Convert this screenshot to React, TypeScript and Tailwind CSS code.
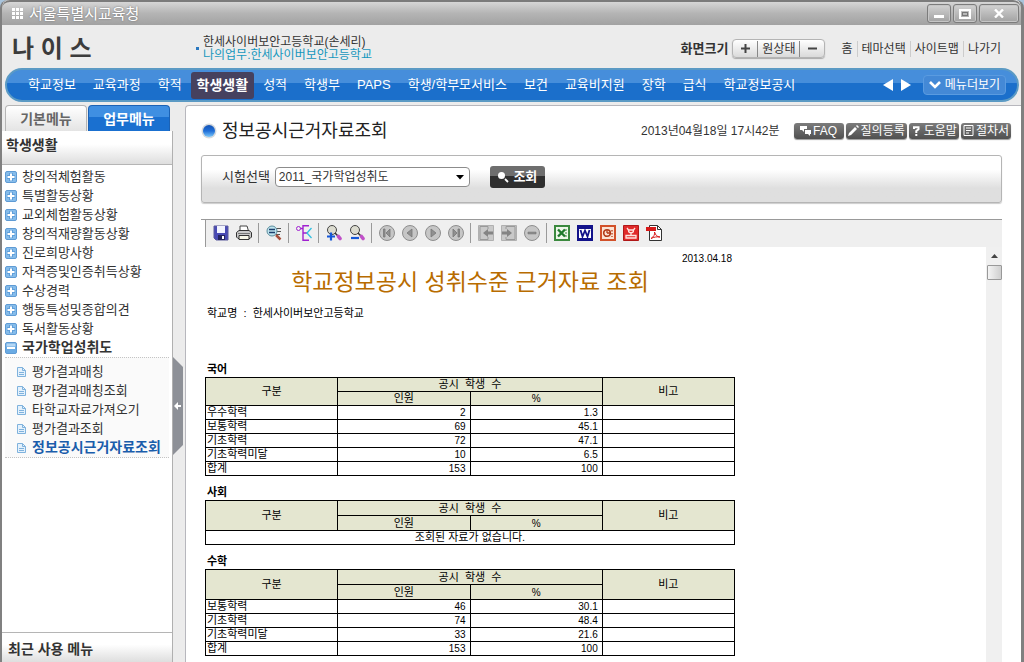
import React from "react";

const SANS = "font-['Liberation_Sans','Noto_Sans_CJK_KR',sans-serif]";

const navItems = [
  "학교정보", "교육과정", "학적", "학생생활", "성적", "학생부", "PAPS",
  "학생/학부모서비스", "보건", "교육비지원", "장학", "급식", "학교정보공시",
];

const sideItems = [
  "창의적체험활동", "특별활동상황", "교외체험활동상황", "창의적재량활동상황", "진로희망사항",
  "자격증및인증취득상황", "수상경력", "행동특성및종합의견", "독서활동상황",
];

const subItems = ["평가결과매칭", "평가결과매칭조회", "타학교자료가져오기", "평가결과조회", "정보공시근거자료조회"];

type Row = [string, string, string];
type Section = { title: string; rows: Row[]; tall: boolean };

const sections: Section[] = [
  {
    title: "국어",
    tall: false,
    rows: [
      ["우수학력", "2", "1.3"],
      ["보통학력", "69", "45.1"],
      ["기초학력", "72", "47.1"],
      ["기초학력미달", "10", "6.5"],
      ["합계", "153", "100"],
    ],
  },
  { title: "사회", tall: true, rows: [] },
  {
    title: "수학",
    tall: true,
    rows: [
      ["보통학력", "46", "30.1"],
      ["기초학력", "74", "48.4"],
      ["기초학력미달", "33", "21.6"],
      ["합계", "153", "100"],
    ],
  },
];

function TitleBar() {
  const btn =
    "flex h-[19px] items-center justify-center rounded-[3px] border border-[#7c7c7c] bg-linear-to-b from-[#d2d2d2] to-[#a2a2a2] shadow-[inset_0_0_0_1px_#c6c6c6]";
  return (
    <header className="flex h-[25px] shrink-0 items-center rounded-t-lg border-t-2 border-[#7b7b7b] bg-linear-to-b from-[#d6d6d6] via-[#b4b4b4] via-50% to-[#a2a2a2] pr-0.5 pl-[10px]">
      <svg width="11" height="11" viewBox="0 0 11 11" fill="#fff" aria-hidden="true">
        {[0, 4, 8].map((y) => [0, 4, 8].map((x) => <rect key={`${x}-${y}`} x={x} y={y} width="3" height="3" />))}
      </svg>
      <h1 className="ml-1.5 grow text-[15px] leading-5 text-white [text-shadow:0_0_2px_#666]">서울특별시교육청</h1>
      <div className="flex gap-0.5">
        <button aria-label="최소화" className={`${btn} w-6`}>
          <svg width="12" height="10"><rect x="1" y="6" width="10" height="3" fill="#fff" /></svg>
        </button>
        <button aria-label="최대화" className={`${btn} w-6`}>
          <svg width="12" height="10" fill="none">
            <rect x="1" y="1" width="10" height="8" stroke="#fff" strokeWidth="2" />
            <rect x="3.5" y="3.5" width="5" height="3" stroke="#777" />
          </svg>
        </button>
        <button aria-label="닫기" className={`${btn} w-10`}>
          <svg width="10" height="9" stroke="#fff" strokeWidth="2.4"><path d="M1 .5 9 8.5M9 .5 1 8.5" /></svg>
        </button>
      </div>
    </header>
  );
}

function TopInfo() {
  return (
    <div className="flex h-[43px] shrink-0 items-center pt-1 pr-5 pl-2.5 text-[#333]">
      <div className="w-[184px] text-[24px] leading-8 font-bold text-[#3c3c3c]">나 이 스</div>
      <div className="grow">
        <div className="flex items-center gap-1">
          <span className="size-[3px] bg-[#2a78c0]" />
          <div className="text-[12px] leading-[13px]">
            <p>한세사이버보안고등학교(손세리)</p>
            <p className="text-[#1597bd]">나의업무:한세사이버보안고등학교</p>
          </div>
        </div>
      </div>
      <span className="text-[13px] font-bold">화면크기</span>
      <div className="ml-1 flex h-[19px] items-center rounded-[4px] border border-[#b4b4b4] bg-linear-to-b from-white to-[#dadada] text-[12px] leading-4 shadow-[0_1px_1px_#aaa]">
        <button aria-label="확대" className="flex w-6 justify-center">
          <svg width="9" height="9" stroke="#444" strokeWidth="2"><path d="M0 4.5h9M4.5 0v9" /></svg>
        </button>
        <button className="border-x border-[#888] px-1">원상태</button>
        <button aria-label="축소" className="flex w-6 justify-center">
          <svg width="9" height="9" stroke="#444" strokeWidth="2"><path d="M0 4.5h9" /></svg>
        </button>
      </div>
      <nav className="ml-3 flex divide-x divide-[#ccc] text-[12px] leading-4">
        {["홈", "테마선택", "사이트맵", "나가기"].map((t) => (
          <a key={t} href="#" className="px-1 last:pr-0">{t}</a>
        ))}
      </nav>
    </div>
  );
}

function MainNav() {
  return (
    <nav className="mr-[2px] ml-[3px] flex h-[34px] shrink-0 items-center gap-px rounded-full border-2 border-[#5b9ac4] bg-linear-to-b from-[#468edb] from-45% to-[#1b6fcb] to-45% pr-[11px] pl-[13px] text-[13px] text-white">
      {navItems.map((t) =>
        t === "학생생활" ? (
          <a key={t} href="#" aria-current="page" className="flex h-[27px] items-center rounded-[3px] bg-[#46415f] px-1.5 text-[14px] font-bold whitespace-nowrap">{t}</a>
        ) : (
          <a key={t} href="#" className="px-2 whitespace-nowrap">{t}</a>
        ),
      )}
      <div className="ml-auto flex items-center">
        <button aria-label="이전"><svg width="10" height="12" fill="#fff"><path d="M10 0v12L0 6z" /></svg></button>
        <button aria-label="다음" className="ml-2"><svg width="10" height="12" fill="#fff"><path d="M0 0v12l10-6z" /></svg></button>
        <button className="ml-3 flex h-5 items-center gap-1 rounded-[4px] border border-[#5a9be0] bg-[#4489d6] px-[5px] text-[12px] leading-4">
          <svg width="12" height="8" fill="none" stroke="#fff" strokeWidth="2.6"><path d="M1 1l5 5 5-5" /></svg>
          메뉴더보기
        </button>
      </div>
    </nav>
  );
}

function BoxIcon({ open }: { open?: boolean }) {
  return (
    <svg width="12" height="12" viewBox="0 0 12 12" className="shrink-0" aria-hidden="true">
      <rect x=".5" y=".5" width="11" height="11" rx="1.5" fill={open ? "#6aabe4" : "#86bcea"} stroke="#5f9bd4" />
      {open ? (
        <>
          <path d="M1.5 1.5h9v3h-9z" fill="#b5d7f5" />
          <path d="M2 6h8" stroke="#fff" strokeWidth="2" />
        </>
      ) : (
        <>
          <path d="M6 2v8M2 6h8" stroke="#5f9fdb" strokeWidth="4" />
          <path d="M6 2.500v7M2.500 6h7" stroke="#fff" strokeWidth="2" />
        </>
      )}
    </svg>
  );
}

function PageIcon() {
  return (
    <svg width="9" height="10" viewBox="0 0 9 10" className="shrink-0" fill="none" aria-hidden="true">
      <path d="M.5.5h5l3 3v6h-8z" fill="#e4f1fc" stroke="#7fb2dd" />
      <path d="M5.5.5v3h3M2 5.500h5M2 7.500h5" stroke="#7fb2dd" />
    </svg>
  );
}

function Sidebar() {
  return (
    <aside className="flex w-[171px] shrink-0 flex-col">
      <div className="flex h-[26px] shrink-0 gap-px px-[3px] text-[14px] leading-5 font-bold">
        <button className="w-[82px] rounded-t-[4px] border border-b-0 border-[#b5b5b5] bg-linear-to-b from-white to-[#e4e4e4] text-[#666]">기본메뉴</button>
        <button className="w-[82px] rounded-t-[4px] border border-b-0 border-[#1b62b5] bg-linear-to-b from-[#3f8fe2] from-45% to-[#1a70d0] to-45% text-white">업무메뉴</button>
      </div>
      <div className="flex min-h-0 grow flex-col border-r border-[#b0b0b0] bg-white">
        <h2 className="flex h-[34px] shrink-0 items-center border-b border-[#b5b5b5] bg-linear-to-b from-white from-40% to-[#dedede] pb-1 pl-1 text-[14px] font-bold text-[#333]">학생생활</h2>
        <ul className="pt-0.5 text-[13px] leading-[19px] text-[#333]">
          {sideItems.map((t) => (
            <li key={t}>
              <a href="#" className="flex items-center gap-[5px] pl-[3px]"><BoxIcon />{t}</a>
            </li>
          ))}
          <li>
            <a href="#" className="flex items-center gap-[5px] pl-[3px] text-[14px] font-bold"><BoxIcon open />국가학업성취도</a>
            <ul className="mx-[3px] border-y border-dotted border-[#c4c4c4] bg-[#fafafa] pt-1">
              {subItems.map((t) => (
                <li key={t}>
                  <a href="#" className={`flex items-center gap-1.5 pl-3 whitespace-nowrap ${t === "정보공시근거자료조회" ? "text-[14px] font-bold text-[#1a5dab]" : ""}`}>
                    <PageIcon />{t}
                  </a>
                </li>
              ))}
            </ul>
          </li>
        </ul>
        <h2 className="mt-auto flex h-[30px] shrink-0 items-center border-t border-[#b5b5b5] bg-linear-to-b from-white from-40% to-[#dedede] pt-1 pl-1.5 text-[14px] font-bold text-[#333]">최근 사용 메뉴</h2>
      </div>
    </aside>
  );
}

function Circle({ d }: { d: string }) {
  return (
    <>
      <circle cx="8" cy="8" r="7.5" fill="#c6c6c6" stroke="#8e8e8e" />
      <path d={d} fill="#909090" stroke="#777" strokeWidth=".8" />
    </>
  );
}

const toolGroups: { name: string; art: React.ReactNode }[][] = [
  [
    {
      name: "저장",
      art: (
        <>
          <path d="M1 1h14v14H3l-2-2z" fill="#4a4bb5" stroke="#5a5a9c" />
          <path d="M4 1h8v7H4z" fill="#f2f4ff" />
          <path d="M5 10h7v5H5z" fill="#24245f" />
          <path d="M9 11h2v3H9z" fill="#fff" />
        </>
      ),
    },
    {
      name: "인쇄",
      art: (
        <>
          <path d="M4 6V1h7l1.500 5" fill="#fff" stroke="#444" />
          <path d="M.5 7.500 3 5.500h10l2.500 2V12l-1.500 1.500H2L.5 12z" fill="#c9c9c9" stroke="#333" />
          <path d="M3 10.500h10v4H3z" fill="#f7f7e8" stroke="#333" />
          <path d="M2 8.500h12" stroke="#777" />
        </>
      ),
    },
  ],
  [
    {
      name: "찾기",
      art: (
        <>
          <path d="M10 3.500h5M10 6.500h5M10 9.500h4" stroke="#555" />
          <circle cx="6" cy="6" r="5" fill="#bfe4ee" stroke="#5b8c9c" />
          <path d="M3 4.500h6M3 7.500h6" stroke="#1d3f6e" strokeWidth="1.500" />
          <path d="m10 10 4.500 4.500" stroke="#a8503c" strokeWidth="2.500" />
        </>
      ),
    },
  ],
  [
    {
      name: "트리",
      art: (
        <g fill="none">
          <circle cx="2.500" cy="3.500" r="2" stroke="#a020d0" />
          <path d="M4.500 3.500h2M13 .8H7v14.400h6M7 8h4" stroke="#a020d0" strokeWidth="1.400" />
          <path d="m15.500 3-4.500 5 4.500 5" stroke="#30bfe0" strokeWidth="1.300" />
        </g>
      ),
    },
  ],
  [
    {
      name: "확대",
      art: (
        <>
          <circle cx="6" cy="5" r="4.500" fill="#dcdcd0" stroke="#444" />
          <path d="m9 8 3 3" stroke="#333" strokeWidth="1.500" />
          <path d="m12.500 11.500 1.500 2" stroke="#c050c8" strokeWidth="3.600" strokeLinecap="round" />
          <path d="M1 11.500h8M5 7.500v8" stroke="#1457d8" strokeWidth="2.200" />
        </>
      ),
    },
    {
      name: "축소",
      art: (
        <>
          <circle cx="6" cy="5" r="4.500" fill="#dcdcd0" stroke="#444" />
          <path d="m9 8 3 3" stroke="#333" strokeWidth="1.500" />
          <path d="m12.500 11.500 1.500 2" stroke="#c050c8" strokeWidth="3.600" strokeLinecap="round" />
          <path d="M2 13h8" stroke="#1457d8" strokeWidth="2.200" />
        </>
      ),
    },
  ],
  [
    { name: "처음", art: <Circle d="M4.500 4h1.500v8H4.500zM11 4v8L7 8z" /> },
    { name: "이전 쪽", art: <Circle d="M10 4v8L5 8z" /> },
    { name: "다음 쪽", art: <Circle d="M6 4v8l5-4z" /> },
    { name: "마지막", art: <Circle d="M10 4h1.500v8H10zM5 4v8l4-4z" /> },
  ],
  [
    {
      name: "뒤로",
      art: (
        <>
          <path d="M.5.5h15v15H.5z" fill="#c9c9c9" stroke="#b0b0b0" />
          <path d="M10 4V1.500H2v13h8V12" fill="none" stroke="#999" />
          <path d="M5 8l5-4v2.500h5v3h-5V12z" fill="#848484" />
        </>
      ),
    },
    {
      name: "앞으로",
      art: (
        <>
          <path d="M.5.5h15v15H.5z" fill="#c9c9c9" stroke="#b0b0b0" />
          <path d="M5 4V1.500h9v13H5V12" fill="none" stroke="#999" />
          <path d="M11 8 6 4v2.500H1v3h5V12z" fill="#848484" />
        </>
      ),
    },
    { name: "중지", art: <Circle d="M4 7.200h8v1.600H4z" /> },
  ],
  [
    {
      name: "엑셀",
      art: (
        <>
          <path d="M1 1h14v14H1z" fill="#eef7ea" stroke="#3b8a3f" strokeWidth="2" />
          <path d="m4 4.500 7 7M11 4.500l-7 7" stroke="#1f7a2c" strokeWidth="2.400" />
          <path d="M11 5h2M11 8h2M11 11h2" stroke="#3b8a3f" />
        </>
      ),
    },
    {
      name: "워드",
      art: (
        <>
          <path d="M0 0h16v16H0z" fill="#12128a" />
          <path d="M2 4h12v9H2z" fill="#fff" />
          <path d="m3.500 5 2 6.500L8 5.500l2.500 6L12.500 5" fill="none" stroke="#12128a" strokeWidth="1.800" />
        </>
      ),
    },
    {
      name: "파워포인트",
      art: (
        <>
          <path d="M1 1h14v14H1z" fill="#fbe3d4" stroke="#d2512a" strokeWidth="2" />
          <circle cx="7" cy="8" r="3.300" fill="none" stroke="#b23a18" strokeWidth="1.600" />
          <path d="M7 8V5M7 8h3M12 5v1.500M12 8v1.500M12 11v1" stroke="#b23a18" strokeWidth="1.300" />
        </>
      ),
    },
    {
      name: "한글",
      art: (
        <>
          <path d="M.5.5h15v15H.5z" fill="#e02a2a" stroke="#b01818" />
          <path d="m4 3 1.500 2h5L12 3M5.500 5.500c0 3 5 3 5 0M8 8v2M3 13v-2.500h10V13z" fill="none" stroke="#ffe5e0" strokeWidth="1.300" />
        </>
      ),
    },
    {
      name: "PDF",
      art: (
        <>
          <path d="M3.500.5h8l4 4v11h-12z" fill="#fff" stroke="#333" />
          <path d="M11.500.5v4h4" fill="none" stroke="#333" />
          <path d="M0 2h10v4H0z" fill="#d81818" />
          <path d="M5 13.500c3-2 4-4 3.500-6.500 1 3 2.500 5 5.500 5-3-.5-6 0-9 1.500z" fill="none" stroke="#d81818" />
        </>
      ),
    },
  ],
];

function Toolbar() {
  return (
    <div className="flex h-7 shrink-0 items-center border-t border-[#999] pl-1">
      <div className="flex h-[27px] grow items-center border-l border-[#999] bg-[#efefef] pb-0.5 pl-[3px]">
        {toolGroups.map((group, i) => (
          <div key={group[0].name} className="flex items-center">
            {i > 0 && <span className="mx-[3px] h-5 w-px bg-[#9a9a9a]" />}
            {group.map((tool) => (
              <button key={tool.name} aria-label={tool.name} className="flex w-[23px] justify-center">
                <svg width="16" height="16" viewBox="0 0 16 16">{tool.art}</svg>
              </button>
            ))}
          </div>
        ))}
      </div>
    </div>
  );
}

function ScoreTable({ section }: { section: Section }) {
  const cell = "border border-black p-0";
  const headHeight = section.tall ? "h-[15px]" : "h-[14px]";
  return (
    <section>
      <h3 className="pl-0.5 text-[11px] leading-[15px] font-bold">{section.title}</h3>
      <table className="w-[530px] table-fixed border-collapse text-[11px] leading-[13px]">
        <thead className="bg-[#e4e6d0]">
          <tr className={headHeight}>
            <th rowSpan={2} className={`${cell} font-normal`}>구분</th>
            <th colSpan={2} className={`${cell} font-normal`}>공시&nbsp; 학생&nbsp; 수</th>
            <th rowSpan={2} className={`${cell} font-normal`}>비고</th>
          </tr>
          <tr className={headHeight}>
            <th className={`${cell} font-normal`}>인원</th>
            <th className={`${cell} text-[10px] font-normal`}>%</th>
          </tr>
        </thead>
        <tbody>
          {section.rows.length === 0 && (
            <tr className="h-[14px]">
              <td colSpan={4} className={`${cell} text-center`}>조회된 자료가 없습니다.</td>
            </tr>
          )}
          {section.rows.map(([name, count, pct]) => (
            <tr key={name} className="h-[14px]">
              <td className={`${cell} pl-px`}>{name}</td>
              <td className={`${cell} pr-1 text-right text-[10px]`}>{count}</td>
              <td className={`${cell} pr-1 text-right text-[10px]`}>{pct}</td>
              <td className={cell} />
            </tr>
          ))}
        </tbody>
      </table>
    </section>
  );
}

function Report() {
  return (
    <div className="flex min-h-0 grow">
      <article className="grow overflow-hidden pl-1 text-black">
        <div className="w-[530px]">
          <p className="pt-1 pr-[3px] text-right text-[10px] leading-4">2013.04.18</p>
          <h2 className="pt-0.5 text-center text-[23px] leading-[26px] text-[#b86c00]">학교정보공시 성취수준 근거자료 조회</h2>
          <p className="pt-2.5 pl-0.5 text-[11px] leading-4">학교명&nbsp; :&nbsp; 한세사이버보안고등학교</p>
          <div className="flex flex-col gap-[9px] pt-[41px]">
            {sections.map((s) => <ScoreTable key={s.title} section={s} />)}
          </div>
        </div>
      </article>
      <div className="flex w-4 shrink-0 flex-col items-center bg-[#f0f0f0]">
        <button aria-label="위로" className="flex h-[18px] w-4 items-center justify-center">
          <svg width="7" height="4" fill="#444"><path d="M0 4 3.500 0 7 4z" /></svg>
        </button>
        <div className="h-[15px] w-[15px] rounded-[1px] border border-[#999] bg-linear-to-r from-[#f4f4f4] to-[#cfcfcf]" />
      </div>
    </div>
  );
}

const helpButtons: { name: string; art: React.ReactNode }[] = [
  { name: "FAQ", art: <path d="M0 1h7v3H4v3L2 5H0zM5 5h6v4h-1v2L8 9H5z" fill="#fff" /> },
  { name: "질의등록", art: <path d="M0 11 1 8l6-6 2 2-6 6zM8 1l1-1 2 2-1 1z" fill="#fff" /> },
  { name: "도움말", art: <path d="M3 4V2.200h4.500v2L5.300 6v2M5.300 9v2" fill="none" stroke="#fff" strokeWidth="2" /> },
  { name: "절차서", art: <path d="M1 .5h9v10H1zM3 3h5M3 5.500h5M3 8h3" fill="none" stroke="#fff" /> },
];

function Content() {
  return (
    <main className="flex min-w-0 grow flex-col rounded-tl-[4px] border-t border-l border-[#b7b7bd] bg-white pr-[19px] pl-[15px]">
      <div className="-mr-3 flex h-[49px] shrink-0 items-center pr-[3px]">
        <svg width="16" height="16" viewBox="0 0 16 16" className="shrink-0" aria-hidden="true">
          <defs>
            <linearGradient id="ball" x1="0" y1="0" x2="0" y2="1">
              <stop offset="0" stopColor="#1553b5" />
              <stop offset=".5" stopColor="#1f6fd8" />
              <stop offset="1" stopColor="#7cc8fa" />
            </linearGradient>
          </defs>
          <circle cx="8" cy="8" r="7.500" fill="#d5dade" />
          <circle cx="8" cy="8" r="6" fill="url(#ball)" />
        </svg>
        <h2 className="ml-[5px] grow text-[18px] leading-6 text-[#222]">정보공시근거자료조회</h2>
        <time className="mr-[14px] text-[12px] text-[#333]">2013년04월18일 17시42분</time>
        <div className="flex gap-0.5">
          {helpButtons.map((b) => (
            <button key={b.name} className="flex h-4 min-w-[50px] items-center justify-center gap-0.5 rounded-[3px] bg-linear-to-b from-[#7c7c7c] to-[#505050] px-0.5 text-[12px] leading-4 whitespace-nowrap text-white shadow-[0_1px_1px_#999]">
              <svg width="11" height="11" className="shrink-0">{b.art}</svg>
              {b.name}
            </button>
          ))}
        </div>
      </div>
      <form className="flex h-12 shrink-0 items-center rounded-[3px] border border-[#b5b5b5] bg-linear-to-b from-white from-30% to-[#dfdfdf] to-70% pb-1 pl-5 text-[#333] shadow-[0_1px_1px_#ccc]" onSubmit={(e) => e.preventDefault()}>
        <label htmlFor="exam" className="text-[13px]">시험선택</label>
        <div className="relative ml-[5px]">
          <select id="exam" className="block h-5 w-[195px] appearance-none rounded-[4px] border border-[#8c8c8c] bg-white pl-[3px] text-[12px] leading-4">
            <option>2011_국가학업성취도</option>
          </select>
          <svg width="8" height="5" className="pointer-events-none absolute top-2 right-1.5"><path d="M0 0h8L4 4.500z" fill="#000" /></svg>
        </div>
        <button className="ml-5 flex h-[22px] w-[55px] items-center justify-center gap-1 rounded-[3px] bg-linear-to-b from-[#6e6e6e] from-45% to-[#2f2f2f] to-45% text-[13px] font-bold text-white">
          <svg width="12" height="12"><circle cx="4.500" cy="4.500" r="3.500" fill="#fff" /><path d="m8 8 3 3" stroke="#fff" strokeWidth="1.800" /></svg>
          조회
        </button>
      </form>
      <div className="mt-4 flex min-h-0 grow flex-col">
        <Toolbar />
        <Report />
      </div>
    </main>
  );
}

export default function App() {
  return (
    <div className={`h-screen overflow-hidden bg-[#a9c4dc] ${SANS}`}>
      <div className="flex h-full flex-col rounded-t-lg border-r-3 border-l-2 border-[#808080] bg-[#ececec]">
        <TitleBar />
        <TopInfo />
        <MainNav />
        <div className="flex min-h-0 grow pt-[3px]">
          <Sidebar />
          <div className="flex w-3 shrink-0 flex-col pt-[252px]">
            <button aria-label="메뉴 접기" className="w-[11px]">
              <svg width="11" height="98" viewBox="0 0 11 98" className="block">
                <path d="M0 0 10 10V88L0 98z" fill="#8d9097" />
                <path d="m1 49 4-4v3h3v2H5v3z" fill="#fff" />
              </svg>
            </button>
          </div>
          <Content />
        </div>
      </div>
    </div>
  );
}
